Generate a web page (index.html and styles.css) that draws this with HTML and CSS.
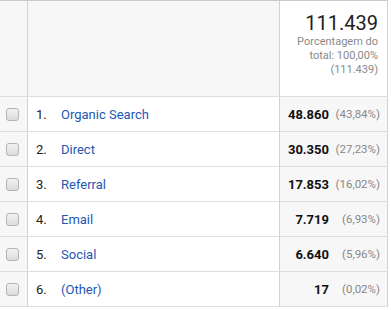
FILE: index.html
```html
<!DOCTYPE html>
<html>
<head>
<meta charset="utf-8">
<link rel="stylesheet" href="styles.css">
</head>
<body>
<div class="table">
  <div class="row head">
    <div class="c-check"></div>
    <div class="c-label"></div>
    <div class="c-metric head-metric">
      <div class="total">111.439</div>
      <div class="sub">Porcentagem do<br>total: 100,00%<br>(111.439)</div>
    </div>
  </div>
  <div class="row">
    <div class="c-check"><span class="box"></span></div>
    <div class="c-label"><span class="idx">1.</span><a class="link">Organic Search</a></div>
    <div class="c-metric"><span class="num">48.860</span><span class="pct">(43,84%)</span></div>
  </div>
  <div class="row">
    <div class="c-check"><span class="box"></span></div>
    <div class="c-label"><span class="idx">2.</span><a class="link">Direct</a></div>
    <div class="c-metric"><span class="num">30.350</span><span class="pct">(27,23%)</span></div>
  </div>
  <div class="row">
    <div class="c-check"><span class="box"></span></div>
    <div class="c-label"><span class="idx">3.</span><a class="link">Referral</a></div>
    <div class="c-metric"><span class="num">17.853</span><span class="pct">(16,02%)</span></div>
  </div>
  <div class="row">
    <div class="c-check"><span class="box"></span></div>
    <div class="c-label"><span class="idx">4.</span><a class="link">Email</a></div>
    <div class="c-metric"><span class="num">7.719</span><span class="pct">(6,93%)</span></div>
  </div>
  <div class="row">
    <div class="c-check"><span class="box"></span></div>
    <div class="c-label"><span class="idx">5.</span><a class="link">Social</a></div>
    <div class="c-metric"><span class="num">6.640</span><span class="pct">(5,96%)</span></div>
  </div>
  <div class="row">
    <div class="c-check"><span class="box"></span></div>
    <div class="c-label"><span class="idx">6.</span><a class="link">(Other)</a></div>
    <div class="c-metric"><span class="num">17</span><span class="pct">(0,02%)</span></div>
  </div>
</div>
</body>
</html>
```
FILE: styles.css
```css
* { box-sizing: border-box; }
html, body { margin: 0; padding: 0; background: #fff; }
body { font-family: Roboto, "Liberation Sans", Arial, sans-serif; color: #222; }

.table {
  width: 388px;
  border-top: 1px solid #cacaca;
}
.row {
  display: grid;
  grid-template-columns: 28px 252px 108px;
  height: 35px;
}
.row.head { height: 96px; }
.row > div {
  border-bottom: 1px solid #dedede;
  border-right: 1px solid #d2d2d2;
}
.c-check {
  background: #f7f7f7;
  display: flex;
  align-items: center;
  padding-left: 6px;
}
.c-label {
  background: #fff;
  display: flex;
  align-items: center;
  font-size: 13px;
}
.head .c-label { background: #f7f7f7; }
.c-metric {
  background: #f7f7f7;
  display: flex;
  align-items: center;
  justify-content: flex-end;
  padding-right: 7px;
}
.head .c-metric {
  background: #fff;
  flex-direction: column;
  align-items: flex-end;
  justify-content: flex-start;
  padding-top: 10px;
  padding-right: 9px;
}
.box {
  width: 13px;
  height: 13px;
  border: 1px solid #b4b4b4;
  border-radius: 3px;
  background: linear-gradient(#f2f2f2, #dcdcdc);
}
.idx {
  flex: none;
  width: 33px;
  padding-left: 8px;
  color: #222;
}
.link { color: #1f57b4; }
.num {
  font-size: 13px;
  font-weight: bold;
  color: #111;
}
.pct {
  font-size: 11.5px;
  color: #888;
  width: 51px;
  text-align: right;
}
.total {
  font-size: 20px;
  line-height: 24px;
  color: #222;
}
.sub {
  font-size: 11px;
  line-height: 14px;
  color: #8a8a8a;
  text-align: right;
  margin-top: 0;
}
```
